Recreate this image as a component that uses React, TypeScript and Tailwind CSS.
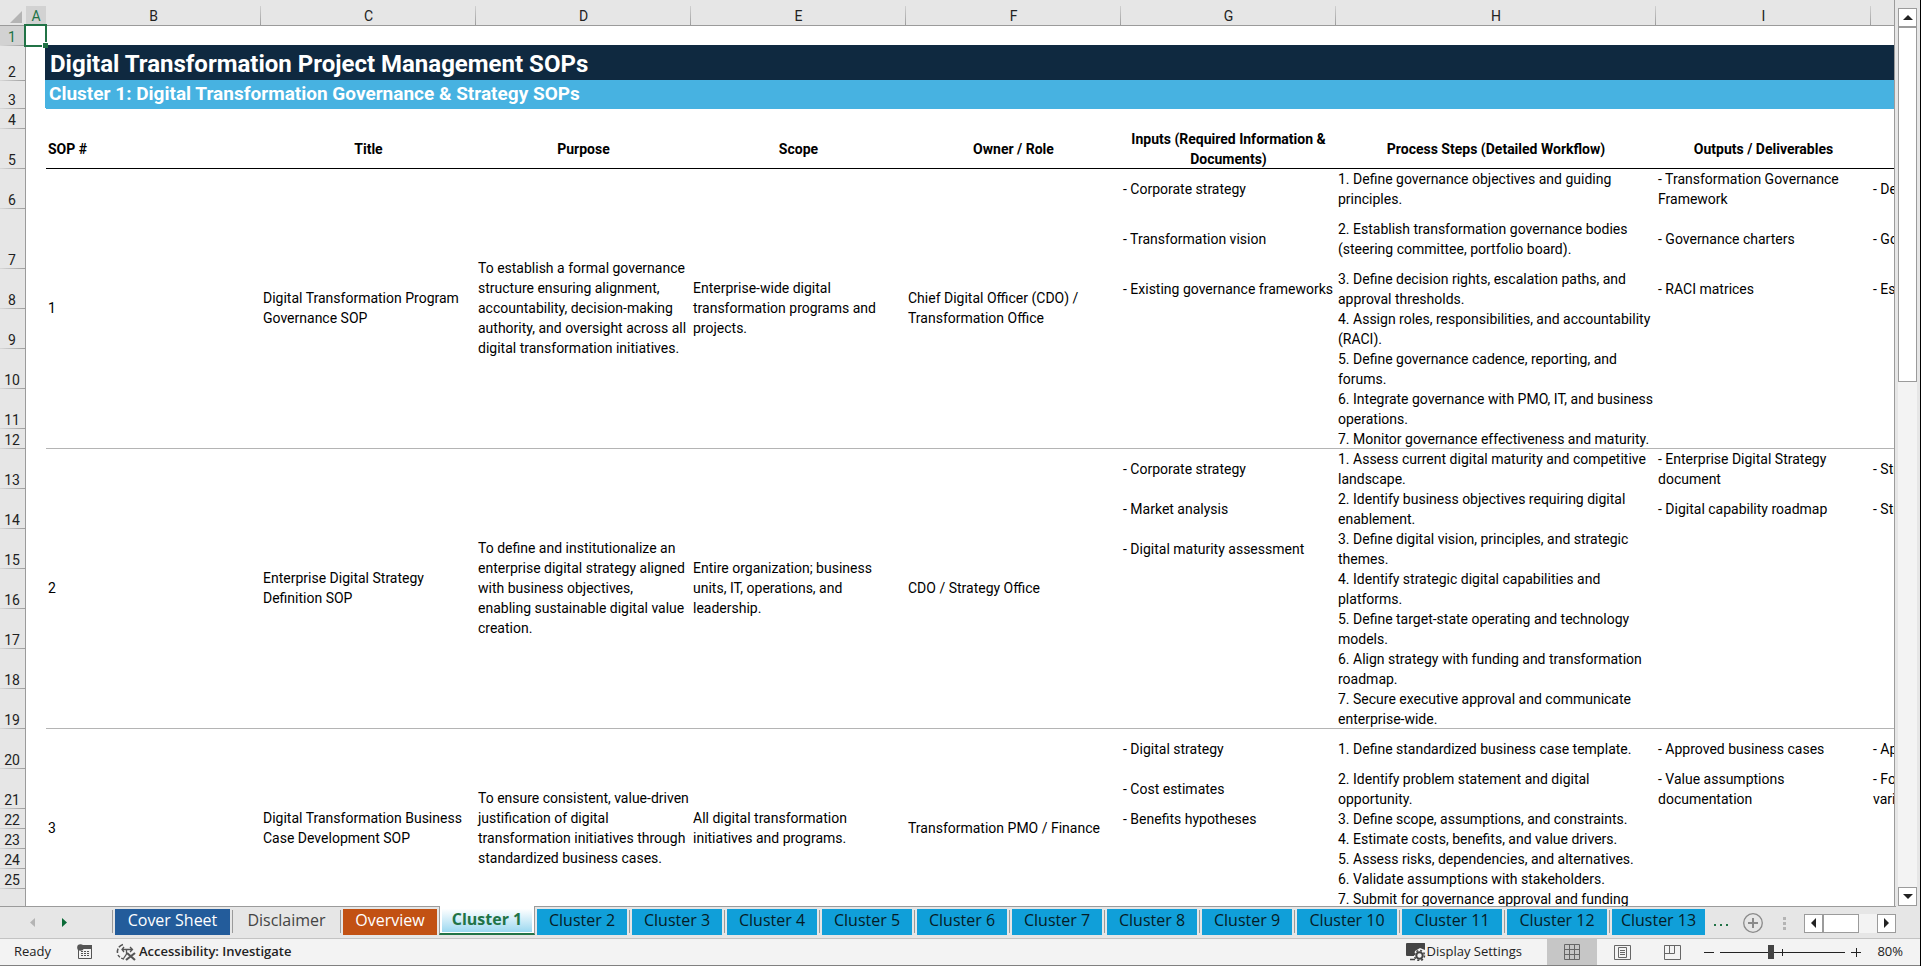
import clsx from "clsx";
import type { ReactNode } from "react";

type Sop = {
  id: number;
  title: string;
  purpose: string;
  scope: string;
  owner: string;
  rows: SopRow[];
};

type SopRow = {
  height: string;
  input?: string;
  step: string;
  output?: string;
  next?: string;
};

const COLUMNS = ["B", "C", "D", "E", "F", "G", "H", "I", ""];

const HEADINGS = [
  "Title",
  "Purpose",
  "Scope",
  "Owner / Role",
  "Inputs (Required Information &\nDocuments)",
  "Process Steps (Detailed Workflow)",
  "Outputs / Deliverables",
  "",
];

const SOPS: Sop[] = [
  {
    id: 1,
    title: "Digital Transformation Program\nGovernance SOP",
    purpose:
      "To establish a formal governance\nstructure ensuring alignment,\naccountability, decision-making\nauthority, and oversight across all\ndigital transformation initiatives.",
    scope: "Enterprise-wide digital\ntransformation programs and\nprojects.",
    owner: "Chief Digital Officer (CDO) /\nTransformation Office",
    rows: [
      {
        height: "h-10",
        input: "- Corporate strategy",
        step: "1. Define governance objectives and guiding\nprinciples.",
        output: "- Transformation Governance\nFramework",
        next: "- Dec",
      },
      {
        height: "h-15",
        input: "- Transformation vision",
        step: "2. Establish transformation governance bodies\n(steering committee, portfolio board).",
        output: "- Governance charters",
        next: "- Gov",
      },
      {
        height: "h-10",
        input: "- Existing governance frameworks",
        step: "3. Define decision rights, escalation paths, and\napproval thresholds.",
        output: "- RACI matrices",
        next: "- Esc",
      },
      { height: "h-10", step: "4. Assign roles, responsibilities, and accountability\n(RACI)." },
      { height: "h-10", step: "5. Define governance cadence, reporting, and\nforums." },
      { height: "h-10", step: "6. Integrate governance with PMO, IT, and business\noperations." },
      { height: "h-5", step: "7. Monitor governance effectiveness and maturity." },
    ],
  },
  {
    id: 2,
    title: "Enterprise Digital Strategy\nDefinition SOP",
    purpose:
      "To define and institutionalize an\nenterprise digital strategy aligned\nwith business objectives,\nenabling sustainable digital value\ncreation.",
    scope: "Entire organization; business\nunits, IT, operations, and\nleadership.",
    owner: "CDO / Strategy Office",
    rows: [
      {
        height: "h-10",
        input: "- Corporate strategy",
        step: "1. Assess current digital maturity and competitive\nlandscape.",
        output: "- Enterprise Digital Strategy\ndocument",
        next: "- Stra",
      },
      {
        height: "h-10",
        input: "- Market analysis",
        step: "2. Identify business objectives requiring digital\nenablement.",
        output: "- Digital capability roadmap",
        next: "- Stra",
      },
      {
        height: "h-10",
        input: "- Digital maturity assessment",
        step: "3. Define digital vision, principles, and strategic\nthemes.",
      },
      { height: "h-10", step: "4. Identify strategic digital capabilities and\nplatforms." },
      { height: "h-10", step: "5. Define target-state operating and technology\nmodels." },
      { height: "h-10", step: "6. Align strategy with funding and transformation\nroadmap." },
      { height: "h-10", step: "7. Secure executive approval and communicate\nenterprise-wide." },
    ],
  },
  {
    id: 3,
    title: "Digital Transformation Business\nCase Development SOP",
    purpose:
      "To ensure consistent, value-driven\njustification of digital\ntransformation initiatives through\nstandardized business cases.",
    scope: "All digital transformation\ninitiatives and programs.",
    owner: "Transformation PMO / Finance",
    rows: [
      {
        height: "h-10",
        input: "- Digital strategy",
        step: "1. Define standardized business case template.",
        output: "- Approved business cases",
        next: "- App",
      },
      {
        height: "h-10",
        input: "- Cost estimates",
        step: "2. Identify problem statement and digital\nopportunity.",
        output: "- Value assumptions\ndocumentation",
        next: "- Fore\nvaria",
      },
      { height: "h-5", input: "- Benefits hypotheses", step: "3. Define scope, assumptions, and constraints." },
      { height: "h-5", step: "4. Estimate costs, benefits, and value drivers." },
      { height: "h-5", step: "5. Assess risks, dependencies, and alternatives." },
      { height: "h-5", step: "6. Validate assumptions with stakeholders." },
      { height: "h-10 align-top", step: "7. Submit for governance approval and funding" },
    ],
  },
];

const TABS = [
  { label: "Cover Sheet", style: "w-[115px] bg-[#235c9b] text-white" },
  { label: "Disclaimer", style: "w-[103px] text-[#444]" },
  { label: "Overview", style: "w-[94px] bg-[#c25113] text-white" },
  { label: "Cluster 1", style: "" },
  ...[2, 3, 4, 5, 6, 7, 8, 9].map((n) => ({
    label: `Cluster ${n}`,
    style: "w-[90px] bg-[#109fd9] text-[#061c26]",
  })),
  ...[10, 11, 12].map((n) => ({
    label: `Cluster ${n}`,
    style: "w-[100px] bg-[#109fd9] text-[#061c26]",
  })),
  { label: "Cluster 13", style: "w-[93px] bg-[#109fd9] text-[#061c26]" },
];

function RowHeader({ n, selected }: { n: number; selected?: boolean }) {
  return (
    <th
      scope="row"
      className={clsx(
        "bg-[linear-gradient(to_right,#d8d8d8,#9b9b9b)] bg-[length:100%_1px] bg-bottom bg-no-repeat pr-0.5 text-center align-bottom leading-[18px] font-normal shadow-[inset_-1px_0_0_#9b9b9b]",
        selected ? "bg-[#d2d2d2] text-[#217346]" : "bg-[#e6e6e6] text-[#222]",
      )}
    >
      {n}
    </th>
  );
}

/** Empty cell of column A. */
function Gutter({ children }: { children?: ReactNode }) {
  return <td className="relative">{children}</td>;
}

function Grid() {
  let rowNumber = 5;
  return (
    <table className="w-[2086px] table-fixed border-separate border-spacing-0 whitespace-pre font-['Roboto',sans-serif] text-sm leading-5 text-black">
      <colgroup>
        <col className="w-[26px]" />
        <col className="w-5" />
        <col className="w-[215px]" />
        <col className="w-[215px]" />
        <col className="w-[215px]" />
        <col className="w-[215px]" />
        <col className="w-[215px]" />
        <col className="w-[215px]" />
        <col className="w-80" />
        <col className="w-[215px]" />
        <col className="w-[215px]" />
      </colgroup>
      <thead>
        <tr className="h-[26px] bg-[#e6e6e6] leading-[19px] text-[#222]">
          <td className="p-0 shadow-[inset_0_-1px_0_#9b9b9b]">
            <svg viewBox="0 0 25 25" className="block size-[25px]">
              <path d="M22 10v12H10z" fill="#b4b4b4" />
            </svg>
          </td>
          <th
            scope="col"
            className="bg-[linear-gradient(#d2d2d2,#d2d2d2)] bg-[length:100%_20px] bg-bottom bg-no-repeat p-0 text-center align-bottom font-normal text-[#217346]"
          >
            A
          </th>
          {COLUMNS.map((letter, i) => (
            <th
              key={i}
              scope="col"
              className="bg-[linear-gradient(#d0d0d0,#9b9b9b)] bg-[length:1px_20px] bg-[position:right_bottom] bg-no-repeat p-0 text-center align-bottom font-normal"
            >
              {letter}
            </th>
          ))}
        </tr>
      </thead>
      <tbody className="[&_td]:pt-0 [&_th]:py-0">
        <tr className="h-5">
          <RowHeader n={1} selected />
          <Gutter>
            <div className="absolute -top-0.5 -left-0.5 z-10 size-[23px] border-2 border-[#217346]">
              <span className="absolute -right-[3px] -bottom-[3px] size-[6px] border-t border-l border-white bg-[#217346]" />
            </div>
          </Gutter>
          <td colSpan={9} className="shadow-[0_-1px_0_#9b9b9b]" />
        </tr>
        <tr className="h-[35px]">
          <RowHeader n={2} />
          <Gutter />
          <td
            colSpan={9}
            className="bg-[#0f2940] px-1 text-2xl leading-[34px] font-bold text-white shadow-[-1px_-1px_0_#0f2940]"
          >
            Digital Transformation Project Management SOPs
          </td>
        </tr>
        <tr className="h-7">
          <RowHeader n={3} />
          <Gutter />
          <td
            colSpan={9}
            className="bg-[#47b2e1] px-[3px] pb-0.5 text-[19px] leading-[26px] font-bold text-white shadow-[-1px_-1px_0_#47b2e1]"
          >
            Cluster 1: Digital Transformation Governance &amp; Strategy SOPs
          </td>
        </tr>
        <tr className="h-5">
          <RowHeader n={4} />
          <Gutter />
          <td colSpan={9} />
        </tr>
        <tr className="h-10">
          <RowHeader n={5} />
          <Gutter />
          <th scope="col" className="px-0.5 text-left font-bold">
            SOP #
          </th>
          {HEADINGS.map((heading, i) => (
            <th key={i} scope="col" className="px-0.5 text-center font-bold">
              {heading}
            </th>
          ))}
        </tr>
        {SOPS.map((sop) =>
          sop.rows.map((row, i) => {
            rowNumber += 1;
            // the rule above a block hangs on its first row
            const rule =
              i > 0
                ? ""
                : sop.id === 1
                  ? "shadow-[0_-1px_0_#000]"
                  : "shadow-[0_-1px_0_#b4b4b4]";
            const cell = clsx("px-0.5 pb-0", rule);
            const merged = clsx("px-0.5 pb-0.5 align-middle", rule);
            return (
              <tr key={rowNumber} className={row.height}>
                <RowHeader n={rowNumber} />
                <Gutter />
                {i === 0 && (
                  <>
                    <td rowSpan={7} className={merged}>{sop.id}</td>
                    <td rowSpan={7} className={merged}>{sop.title}</td>
                    <td rowSpan={7} className={merged}>{sop.purpose}</td>
                    <td rowSpan={7} className={merged}>{sop.scope}</td>
                    <td rowSpan={7} className={merged}>{sop.owner}</td>
                  </>
                )}
                <td className={cell}>{row.input}</td>
                <td className={cell}>{row.step}</td>
                <td className={cell}>{row.output}</td>
                <td className={cell}>{row.next}</td>
              </tr>
            );
          }),
        )}
      </tbody>
    </table>
  );
}

function VerticalScroll() {
  return (
    <div className="flex w-[19px] flex-none flex-col bg-[#f3f3f3]">
      <div className="h-2 flex-none bg-[#e6e6e6]" />
      <button aria-label="Scroll up" className="flex h-[19px] flex-none items-center justify-center border border-[#9b9b9b] bg-white">
        <svg viewBox="0 0 10 5" className="h-[5px] w-[10px]"><path d="M0 5h10L5 0z" fill="#222" /></svg>
      </button>
      <div className="h-[355px] flex-none border border-[#9b9b9b] bg-white" />
      <div className="flex-1" />
      <button aria-label="Scroll down" className="flex h-[19px] flex-none items-center justify-center border border-[#9b9b9b] bg-white">
        <svg viewBox="0 0 10 5" className="h-[5px] w-[10px]"><path d="M0 0h10L5 5z" fill="#222" /></svg>
      </button>
    </div>
  );
}

function SheetTabs() {
  return (
    <div className="flex h-[33px] flex-none border-b border-[#c3c3c3] bg-[#e6e6e6] pr-6 text-base leading-[22px]">
      <div className="flex w-28 flex-none items-center gap-[27px] border-t border-[#9b9b9b] pl-[30px]">
        <button aria-label="Previous sheets">
          <svg viewBox="0 0 5 9" className="h-[9px] w-[5px]"><path d="M5 0v9L0 4.5z" fill="#b4b4b4" /></svg>
        </button>
        <button aria-label="Next sheets">
          <svg viewBox="0 0 5 9" className="h-[9px] w-[5px]"><path d="M0 0v9l5-4.5z" fill="#0b6a37" /></svg>
        </button>
      </div>
      <div role="tablist" className="flex flex-none">
        {TABS.map((tab, i) =>
          tab.label === "Cluster 1" ? (
            <button
              key={tab.label}
              role="tab"
              aria-selected="true"
              className="h-[29px] w-[96px] border-x border-b-2 border-x-[#9b9b9b] border-b-[#217346] bg-white px-0.5 pb-px font-bold text-[#217346]"
            >
              <span className="block h-[26px] bg-linear-to-b from-white from-10% to-[#9bd8f0] pt-0.5">{tab.label}</span>
            </button>
          ) : (
            <div key={tab.label} className="flex items-start border-t border-[#9b9b9b] pt-0.5">
              <span className={clsx("mt-px mr-0.5 h-[23px]", i !== 4 && "w-px bg-[#9b9b9b]")} />
              <button role="tab" aria-selected="false" className={clsx("mr-0.5 h-[26px] pb-1", tab.style)}>
                {tab.label}
              </button>
            </div>
          ),
        )}
      </div>
      <div className="flex flex-1 items-center border-t border-[#9b9b9b] pt-px">
        <button aria-label="More sheets" className="ml-[7px] flex w-[14px] justify-between pt-1">
          <i className="size-[2px] bg-[#217346]" />
          <i className="size-[2px] bg-[#217346]" />
          <i className="size-[2px] bg-[#217346]" />
        </button>
        <button aria-label="New sheet" className="ml-[15px]">
          <svg viewBox="0 0 20 20" className="size-5" fill="none" stroke="#8a8a8a">
            <circle cx="10" cy="10" r="9.3" strokeWidth="1.3" />
            <path d="M10 5v10M5 10h10" strokeWidth="2" />
          </svg>
        </button>
        <div className="ml-5 flex flex-col gap-0.5">
          <i className="size-[3px] bg-[#b4b4b4]" />
          <i className="size-[3px] bg-[#b4b4b4]" />
          <i className="size-[3px] bg-[#b4b4b4]" />
        </div>
        <div className="ml-auto flex h-[19px] w-[92px] flex-none bg-[#f3f3f3]">
          <button aria-label="Scroll left" className="flex w-[19px] items-center justify-center border border-[#9b9b9b] bg-white">
            <svg viewBox="0 0 5 10" className="h-[10px] w-[5px]"><path d="M5 0v10L0 5z" fill="#222" /></svg>
          </button>
          <div className="w-9 border border-[#9b9b9b] bg-white" />
          <button aria-label="Scroll right" className="ml-auto flex w-[19px] items-center justify-center border border-[#9b9b9b] bg-white">
            <svg viewBox="0 0 5 10" className="h-[10px] w-[5px]"><path d="M0 0v10l5-5z" fill="#222" /></svg>
          </button>
        </div>
      </div>
    </div>
  );
}

function StatusBar() {
  return (
    <div className="flex h-[27px] flex-none items-center border-b border-[#808080] bg-[#f3f3f3] pr-[17px] pl-[14px] text-[13px] text-[#222]">
      <span>Ready</span>
      <button aria-label="Record macro" className="ml-[26px]">
        <svg viewBox="0 0 16 16" className="size-4">
          <path d="M6 1h9v4H6z" fill="#555" />
          <path d="M1.5 6v8.5h13V4" fill="none" stroke="#555" />
          <path d="M4 7.5h9M4 9.500h9M4 11.5h9" stroke="#555" strokeDasharray="2 1" />
          <circle cx="3.5" cy="3.5" r="3.3" fill="#555" />
        </svg>
      </button>
      <button className="ml-[23px] flex items-center gap-[3px] font-semibold">
        <svg viewBox="0 0 20 18" className="h-[18px] w-5" fill="none" stroke="#555">
          <path d="M7 1.500A7.500 7.500 0 0 0 1.500 10" strokeDasharray="5 1.500" strokeWidth="1.500" />
          <path d="M2 12a8 8 0 0 0 6 4" strokeDasharray="3 1.500" strokeWidth="1.500" />
          <path d="M6 6.500h10M10.500 6.500v4.500l-3 4.500M14 4l2.500 2.500L14 9M8 4L6 6.500 8 9" strokeWidth="1.300" />
          <path d="M11 10l8 7M19 10l-9 7" strokeWidth="2.200" />
        </svg>
        Accessibility: Investigate
      </button>
      <button className="ml-auto flex items-center gap-px">
        <svg viewBox="0 0 20 18" className="h-[18px] w-5">
          <path d="M1 0h17.500q.5 0 .5.500V7l-5-2-5 3-1 5H1q-1 0-1-1V1q0-1 1-1z" fill="#444" />
          <path d="M4 16.500h5" stroke="#444" strokeWidth="1.500" />
          <circle cx="13.500" cy="12.500" r="3.200" fill="none" stroke="#444" strokeWidth="2" />
          <circle cx="13.500" cy="12.500" r="5" fill="none" stroke="#444" strokeWidth="1.500" strokeDasharray="2 1.930" />
        </svg>
        Display Settings
      </button>
      <div className="ml-[25px] flex h-full flex-none">
        <button aria-label="Normal view" className="flex w-[50px] items-center justify-center bg-[#c6c6c6]">
          <svg viewBox="0 0 16 16" className="size-4" fill="none" stroke="#666">
            <path d="M.5.5h15v15H.5zM5.500.5v15M10.500.5v15M.5 5.500h15M.5 10.500h15" />
          </svg>
        </button>
        <button aria-label="Page layout view" className="flex w-[50px] items-center justify-center">
          <svg viewBox="0 0 17 15" className="h-[15px] w-[17px]" fill="none" stroke="#666">
            <path d="M.5.5h16v14H.5zM4.500 2.500h8v10h-8zM6 5.500h5M6 7.500h5M6 9.500h5" />
          </svg>
        </button>
        <button aria-label="Page break preview" className="flex w-[50px] items-center justify-center">
          <svg viewBox="0 0 17 15" className="h-[15px] w-[17px]" fill="none" stroke="#666">
            <path d="M.5.5h16v14H.5zM.5 8.500h10V.5M5.500.5v8" />
          </svg>
        </button>
      </div>
      <button aria-label="Zoom out" className="ml-[7px]">
        <svg viewBox="0 0 10 10" className="size-[10px]"><path d="M0 5.500h10" stroke="#222" /></svg>
      </button>
      <div className="relative mx-[6px] flex h-[15px] w-[125px] flex-none items-center">
        <span className="absolute top-[4px] left-[62px] h-[7px] w-px bg-[#222]" />
        <input
          type="range"
          min={0}
          max={100}
          defaultValue={40}
          aria-label="Zoom"
          className="relative h-[15px] w-full appearance-none bg-[linear-gradient(#222,#222)] bg-[length:100%_1px] bg-center bg-no-repeat [&::-webkit-slider-thumb]:h-[14px] [&::-webkit-slider-thumb]:w-[6px] [&::-webkit-slider-thumb]:appearance-none [&::-webkit-slider-thumb]:bg-[#444]"
        />
      </div>
      <button aria-label="Zoom in">
        <svg viewBox="0 0 10 10" className="size-[10px]"><path d="M0 5.500h10M5.500 1v9" stroke="#222" /></svg>
      </button>
      <button className="ml-4 w-[26px] flex-none text-right">80%</button>
    </div>
  );
}

export default function App() {
  return (
    <div className="flex h-screen flex-col overflow-hidden border-r border-black bg-[#e6e6e6] font-['Open_Sans',sans-serif]">
      <div className="flex min-h-0 flex-1">
        <div className="min-w-0 flex-1 overflow-hidden border-r border-[#9b9b9b] bg-white">
          <Grid />
        </div>
        <div className="flex flex-none px-[3px]">
          <VerticalScroll />
        </div>
      </div>
      <SheetTabs />
      <StatusBar />
    </div>
  );
}
